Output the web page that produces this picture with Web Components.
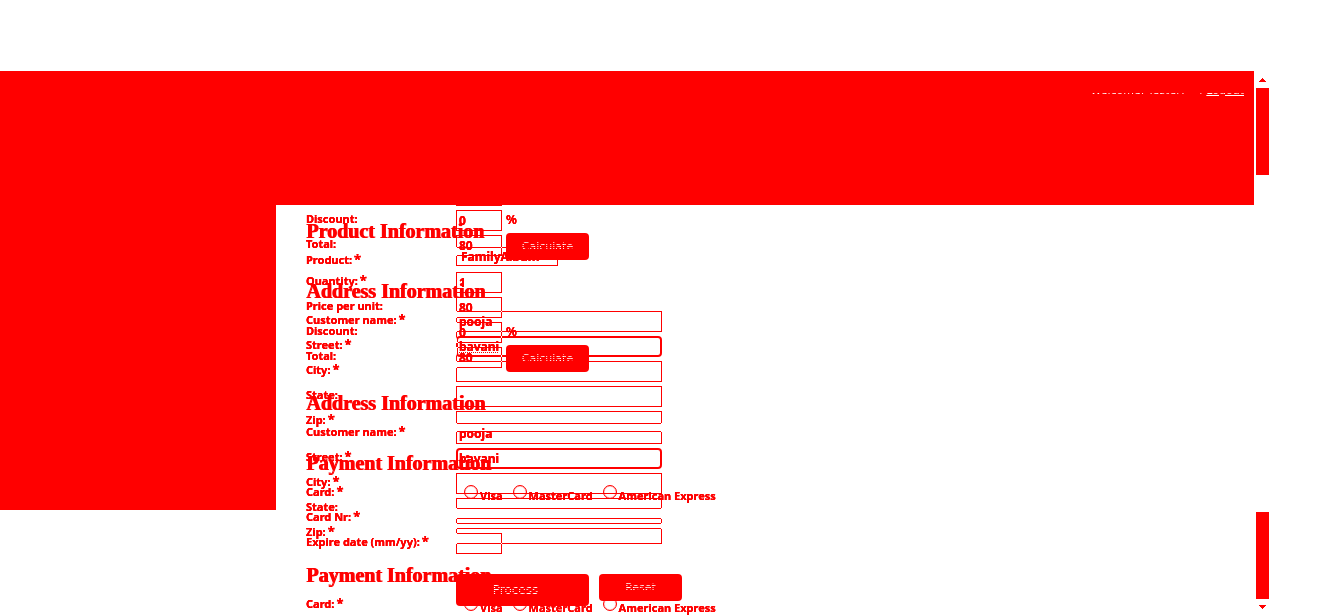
<!DOCTYPE html>
<html lang="en">
<head>
<meta charset="utf-8">
<title>Order</title>
<style>
html,body{margin:0;background:#fff;color:#f00;font:bold 11px "Noto Sans",sans-serif;overflow:hidden}
body{text-shadow:0 0 0 #f00,0 0 0 #f00}
</style>
</head>
<body>
<order-page></order-page>
<script>
const define=(name,html)=>customElements.define(name,class extends HTMLElement{
  connectedCallback(){
    if(this.shadowRoot)return;
    const t=document.createElement('template');
    t.innerHTML=typeof html==='function'?html(this):html;
    this.attachShadow({mode:'open'}).append(t.content.cloneNode(true));
  }
});

/* A framed text box. Frames of the two forms cancel out where they coincide. */
define('field-box',el=>`
<style>
:host{display:block;position:relative;height:21px;width:206px}
:host([size=s]){width:46px}
:host([size=m]){width:102px;height:19px}
.frame{position:absolute;inset:0;border:1px solid #0ff;mix-blend-mode:difference}
:host([active]) .frame{border-width:2px;border-radius:4px;mix-blend-mode:normal;border-color:#f00}
input,select{position:relative;z-index:1;display:block;box-sizing:border-box;width:100%;height:100%;margin:0;padding:0 3px;border:0;outline:0;background:none;color:#f00;font:bold 12px "Noto Sans",sans-serif;text-shadow:0 0 0 #f00,0 0 0 #f00;appearance:none}
select{padding:0 5px}
:host([active]) input{text-decoration:var(--spell,none)}
</style>
<span class="frame"></span>
${el.hasAttribute('select')
 ?`<select aria-label="${el.getAttribute('label')}"><option>${el.getAttribute('value')}</option></select>`
 :`<input type="text" spellcheck="false" aria-label="${el.getAttribute('label')}" value="${el.getAttribute('value')||''}">`}`);

define('form-row',el=>`
<style>
:host{display:grid;grid-template-columns:150px 1fr;height:21px;margin-bottom:4px}
.label{position:relative;z-index:1;line-height:18px;white-space:nowrap}
:host([low]) .label{line-height:26px}
.star{font-size:13px;line-height:1;margin-left:2px}
.value{display:flex;align-items:flex-start;gap:4px}
</style>
<span class="label">${el.getAttribute('label')}${el.hasAttribute('required')?'<span class="star">*</span>':''}</span><div class="value"><slot></slot></div>`);

define('form-section',el=>`
<style>
:host{display:block}
h3{position:relative;z-index:1;margin:0;height:40px;font:bold 20px/40px "Liberation Serif",serif;white-space:nowrap;text-shadow:1px 0 0 #f00}
:host([tight]) h3{height:36px}
</style>
<h3>${el.getAttribute('heading')}</h3><slot></slot>`);

define('push-button',`
<style>
:host{display:block;position:relative;z-index:1;width:83px}
:host([wide]){width:133px}
button{display:block;width:100%;height:27px;margin:0;padding:0;border:0;border-radius:4px;background:#f00;font:11px/27px "DejaVu Sans",sans-serif}
:host([wide]) button{height:32px;font-size:12px;line-height:32px;padding-right:14px}
span{color:transparent;text-shadow:none;background:repeating-linear-gradient(#fff 0 1px,#f00 1px 2px);background-clip:text;-webkit-background-clip:text}
</style>
<button type="button"><span><slot></slot></span></button>`);

define('card-option',`
<style>
:host{display:block;position:relative;z-index:1}
label{display:flex;align-items:center;gap:2px;height:18px;white-space:nowrap}
input{appearance:none;box-sizing:border-box;width:14px;height:14px;margin:0;border:1px solid #f00;border-radius:50%;box-shadow:inset 0 0 1px #f00}
span{padding-top:6px}
</style>
<label><input type="radio" name="card"><span><slot></slot></span></label>`);

define('order-form',`
<style>
:host{display:block}
.percent{position:relative;z-index:1;line-height:20px;font-size:12px}
.cards{display:flex;gap:10px;padding-left:8px}
.actions{display:flex;gap:10px;padding:16px 0 0 150px}
.address{margin-top:15px}
.payment{margin-top:11px}
.calc{margin-top:-2px}
</style>
<form-section heading="Product Information" tight>
<form-row label="Product:" required low><field-box size="m" select label="Product" value="FamilyAlbum"></field-box></form-row>
<form-row label="Quantity:" required><field-box size="s" label="Quantity" value="1"></field-box></form-row>
<form-row label="Price per unit:"><field-box size="s" label="Price per unit" value="80"></field-box></form-row>
<form-row label="Discount:"><field-box size="s" label="Discount" value="0"></field-box><span class="percent">%</span></form-row>
<form-row label="Total:"><field-box size="s" label="Total" value="80"></field-box><push-button class="calc">Calculate</push-button></form-row>
</form-section>
<form-section class="address" heading="Address Information">
<form-row label="Customer name:" required><field-box label="Customer name" value="pooja"></field-box></form-row>
<form-row label="Street:" required><field-box active label="Street" value="bavani"></field-box></form-row>
<form-row label="City:" required><field-box label="City"></field-box></form-row>
<form-row label="State:"><field-box label="State"></field-box></form-row>
<form-row label="Zip:" required><field-box label="Zip"></field-box></form-row>
</form-section>
<form-section class="payment" heading="Payment Information">
<form-row label="Card:" required><div class="cards"><card-option>Visa</card-option><card-option>MasterCard</card-option><card-option>American Express</card-option></div></form-row>
<form-row label="Card Nr:" required><field-box label="Card number"></field-box></form-row>
<form-row label="Expire date (mm/yy):" required><field-box size="s" label="Expire date"></field-box></form-row>
</form-section>
<div class="actions"><push-button wide>Process</push-button><push-button>Reset</push-button></div>`);

define('page-header',`
<style>
:host{display:flex;justify-content:flex-end;height:134px;box-sizing:border-box;padding:12px 10px 0 0;background:#f00;font:11px/16px "DejaVu Sans",sans-serif}
div{color:transparent;text-shadow:none;height:16px;white-space:pre;background:linear-gradient(#f00 0 10px,#fff 10px 11px,#f00 11px);background-clip:text;-webkit-background-clip:text}
a{color:inherit;text-decoration:underline #fff 1px}
</style>
<div>Welcome, Tester!    | <a href="#">Logout</a></div>`);

define('scroll-rail',`
<style>
:host{display:flex;flex-direction:column;align-items:center;width:13px;padding-top:7px}
i{width:13px;height:87px;background:#f00}
svg{display:block;width:7px;height:4px;fill:#f00}
svg.up{margin-bottom:6px}
i.end{margin-top:auto}
svg.down{margin:6px 0 7px}
</style>
<svg class="up" viewBox="0 0 7 4" shape-rendering="crispEdges"><path d="M3 0h1v1h1v1h1v1h1v1H0V3h1V2h1V1h1z"/></svg><i></i>
<i class="end"></i><svg class="down" viewBox="0 0 7 4" shape-rendering="crispEdges"><path d="M0 0h7v1H6v1H5v1H4v1H3V3H2V2H1V1H0z"/></svg>`);

define('order-page',`
<style>
:host{display:grid;grid-template-columns:1fr 13px;column-gap:2px;box-sizing:border-box;height:100vh;padding:71px 49px 0 0;overflow:hidden;background:#fff}
.main{display:flex;flex-direction:column;min-width:0;min-height:0}
.body{display:grid;grid-template-columns:276px 1fr;flex:1;min-height:0}
.side{height:305px;background:#f00}
.forms{display:grid;align-items:start;padding-left:30px;min-height:0;overflow:hidden}
order-form{grid-area:1/1}
.first{margin-top:-106px;--spell:underline dotted #f00 1px}
.second{margin-top:6px}
</style>
<div class="main"><page-header></page-header>
<div class="body"><div class="side"></div>
<div class="forms"><order-form class="first"></order-form><order-form class="second"></order-form></div></div></div>
<scroll-rail></scroll-rail>`);
</script>
</body>
</html>
